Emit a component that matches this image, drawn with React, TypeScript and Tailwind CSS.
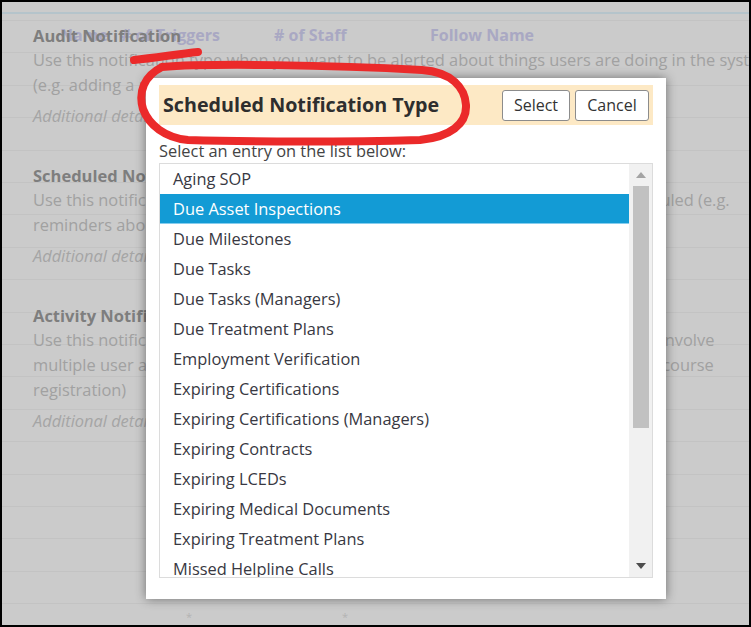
const entries = [
  'Aging SOP',
  'Due Asset Inspections',
  'Due Milestones',
  'Due Tasks',
  'Due Tasks (Managers)',
  'Due Treatment Plans',
  'Employment Verification',
  'Expiring Certifications',
  'Expiring Certifications (Managers)',
  'Expiring Contracts',
  'Expiring LCEDs',
  'Expiring Medical Documents',
  'Expiring Treatment Plans',
  'Missed Helpline Calls',
]

const sections = [
  {
    title: 'Audit Notification',
    lines: [
      'Use this notification type when you want to be alerted about things users are doing in the system',
      '(e.g. adding a new user or changing a record)',
    ],
  },
  {
    title: 'Scheduled Notification',
    lines: [
      'Use this notification type when you want to send alerts about items that are scheduled (e.g.',
      'reminders about upcoming due dates)',
    ],
  },
  {
    title: 'Activity Notification',
    lines: [
      'Use this notification type when you want to be alerted about any actions that may involve',
      'multiple user actions over a period of time (e.g. a student completing all steps of a course',
      'registration)',
    ],
  },
]

const NotificationSection = ({ title, lines }: { title: string; lines: string[] }) => (
  <div className="mb-[36px]">
    <div className="h-[23px] text-[16.5px] font-bold leading-[23px] text-[#7e7e7e]">{title}</div>
    {lines.map((line) => (
      <div key={line} className="whitespace-nowrap text-[16.4px] leading-[25px] text-[#a1a1a1]">{line}</div>
    ))}
    <div className="mt-[6px] text-[16.4px] italic leading-[25px] text-[#a5a5a5]">Additional details</div>
  </div>
)

const ScrollArrow = ({ down }: { down?: boolean }) => (
  <svg width="10" height="6" viewBox="0 0 10 6">
    {down ? <path d="M0 0 L10 0 L5 6 Z" fill="#4d4d4d" /> : <path d="M0 6 L10 6 L5 0 Z" fill="#a4a4a4" />}
  </svg>
)

export default function App() {
  return (
    <div className="relative h-[627px] w-[751px] overflow-hidden border-2 border-black bg-[#cbcbcb] bg-[repeating-linear-gradient(to_bottom,transparent_0px,transparent_18px,#c3c3c3_18px,#c3c3c3_19px,transparent_19px,transparent_32.4px)] font-['Open_Sans',sans-serif]">
      <div className="h-[12px] border-b-2 border-[#b5c4cb]" />

      {/* page content behind the dialog */}
      <div className="relative pl-[31px] pt-[10px]">
        <div className="flex h-[23px] text-[16px] font-bold leading-[23px] text-[#a9a8c3]">
          <span className="ml-[27px] w-[61px]">Name</span>
          <span className="w-[153px]"># of Triggers</span>
          <span className="w-[156px]"># of Staff</span>
          <span>Follow Name</span>
        </div>
        <div className="-mt-[23px]">
          {sections.map((s) => (
            <NotificationSection key={s.title} title={s.title} lines={s.lines} />
          ))}
        </div>
      </div>
      <div className="absolute bottom-[0px] left-[184px] flex gap-[150px] text-[11px] text-[#b3b3b3]">
        <span>*</span>
        <span>*</span>
      </div>

      {/* dialog */}
      <div className="absolute left-[144px] top-[76px] flex h-[521px] w-[520px] flex-col bg-white px-[13px] pt-[7px] shadow-[0_0_10px_rgba(0,0,0,0.45)]">
        <div className="flex h-[40px] items-center justify-between bg-[#fde9c5] pl-[4px] pr-[4px]">
          <span className="text-[19.7px] font-bold text-[#2e2e2e]">Scheduled Notification Type</span>
          <div className="flex gap-[5px]">
            <button className="h-[31px] w-[68px] rounded-[3px] border border-[#8c8c8c] bg-white text-[16px] text-[#333]">Select</button>
            <button className="h-[31px] w-[74px] rounded-[3px] border border-[#8c8c8c] bg-white text-[16px] text-[#333]">Cancel</button>
          </div>
        </div>
        <div className="mt-[16px] text-[16.4px] leading-[20px] text-[#444]">Select an entry on the list below:</div>
        <div className="mt-[2px] flex h-[415px] border border-[#dcdcdc]">
          <div className="flex-1 overflow-hidden">
            {entries.map((e, i) => (
              <div
                key={e}
                className={
                  i === 1
                    ? 'h-[30px] border-b border-[#86cdee] bg-[#139bd5] pl-[13px] text-[16.4px] leading-[29px] text-white'
                    : 'h-[30px] pl-[13px] text-[16.4px] leading-[30px] text-[#383842]'
                }
              >
                {e}
              </div>
            ))}
          </div>
          <div className="flex w-[23px] flex-col items-center bg-[#f1f1f1]">
            <div className="flex h-[22px] items-center justify-center">
              <ScrollArrow />
            </div>
            <div className="h-[242px] w-[16px] bg-[#c1c1c1]" />
            <div className="flex-1" />
            <div className="flex h-[22px] items-center justify-center">
              <ScrollArrow down />
            </div>
          </div>
        </div>
      </div>

      {/* red marker circle */}
      <svg className="pointer-events-none absolute -left-[2px] -top-[2px]" width="751" height="627" viewBox="0 0 751 627">
        <g fill="none" stroke="#eb2a2a" strokeWidth="8" strokeLinecap="round" strokeLinejoin="round">
          <path d="M134 60 C 155 58, 178 54, 198 52" />
          <path d="M162 67 C 210 63, 330 65, 422 70 C 452 72, 465 88, 466 105 C 467 124, 450 137, 420 140 C 350 142, 250 142, 188 140 C 165 138, 149 125, 143 109 C 138 92, 144 76, 162 67" />
        </g>
      </svg>
    </div>
  )
}
